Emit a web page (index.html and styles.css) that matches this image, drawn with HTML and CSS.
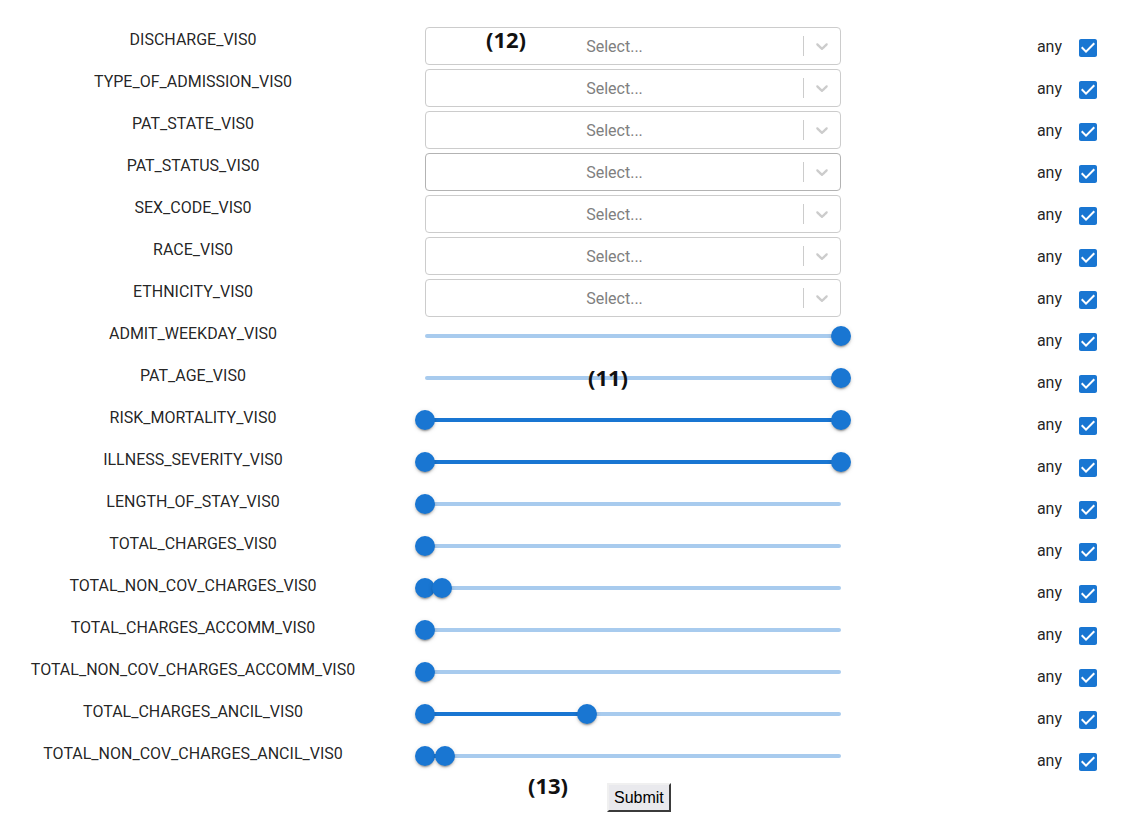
FILE: index.html
```html
<!DOCTYPE html>
<html>
<head>
<meta charset="utf-8">
<link rel="stylesheet" href="styles.css">
</head>
<body>
<div class="page">
  <div class="form">
    <div class="row">
      <div class="label">DISCHARGE_VIS0</div>
      <div class="control"><div class="select"><div class="value">Select...</div><div class="sep"></div><div class="indicator"><svg viewBox="0 0 20 20" width="20" height="20"><path d="M4.516 7.548c0.436-0.446 1.043-0.481 1.576 0l3.908 3.747 3.908-3.747c0.533-0.481 1.141-0.446 1.574 0 0.436 0.445 0.408 1.197 0 1.615-0.406 0.418-4.695 4.502-4.695 4.502-0.217 0.223-0.502 0.335-0.787 0.335s-0.57-0.112-0.789-0.335c0 0-4.287-4.084-4.695-4.502s-0.436-1.170 0-1.615z"/></svg></div></div></div>
      <div class="any"><span>any</span><span class="cb"><svg viewBox="0 0 24 24" width="24" height="24"><path d="M19 3H5c-1.11 0-2 .9-2 2v14c0 1.1.89 2 2 2h14c1.11 0 2-.9 2-2V5c0-1.1-.89-2-2-2zm-9 14l-5-5 1.41-1.41L10 14.17l7.59-7.59L19 8l-9 9z"/></svg></span></div>
    </div>
    <div class="row">
      <div class="label">TYPE_OF_ADMISSION_VIS0</div>
      <div class="control"><div class="select"><div class="value">Select...</div><div class="sep"></div><div class="indicator"><svg viewBox="0 0 20 20" width="20" height="20"><path d="M4.516 7.548c0.436-0.446 1.043-0.481 1.576 0l3.908 3.747 3.908-3.747c0.533-0.481 1.141-0.446 1.574 0 0.436 0.445 0.408 1.197 0 1.615-0.406 0.418-4.695 4.502-4.695 4.502-0.217 0.223-0.502 0.335-0.787 0.335s-0.57-0.112-0.789-0.335c0 0-4.287-4.084-4.695-4.502s-0.436-1.17 0-1.615z"/></svg></div></div></div>
      <div class="any"><span>any</span><span class="cb"><svg viewBox="0 0 24 24" width="24" height="24"><path d="M19 3H5c-1.11 0-2 .9-2 2v14c0 1.1.89 2 2 2h14c1.11 0 2-.9 2-2V5c0-1.1-.89-2-2-2zm-9 14l-5-5 1.41-1.41L10 14.17l7.59-7.59L19 8l-9 9z"/></svg></span></div>
    </div>
    <div class="row">
      <div class="label">PAT_STATE_VIS0</div>
      <div class="control"><div class="select"><div class="value">Select...</div><div class="sep"></div><div class="indicator"><svg viewBox="0 0 20 20" width="20" height="20"><path d="M4.516 7.548c0.436-0.446 1.043-0.481 1.576 0l3.908 3.747 3.908-3.747c0.533-0.481 1.141-0.446 1.574 0 0.436 0.445 0.408 1.197 0 1.615-0.406 0.418-4.695 4.502-4.695 4.502-0.217 0.223-0.502 0.335-0.787 0.335s-0.57-0.112-0.789-0.335c0 0-4.287-4.084-4.695-4.502s-0.436-1.17 0-1.615z"/></svg></div></div></div>
      <div class="any"><span>any</span><span class="cb"><svg viewBox="0 0 24 24" width="24" height="24"><path d="M19 3H5c-1.11 0-2 .9-2 2v14c0 1.1.89 2 2 2h14c1.11 0 2-.9 2-2V5c0-1.1-.89-2-2-2zm-9 14l-5-5 1.41-1.41L10 14.17l7.59-7.59L19 8l-9 9z"/></svg></span></div>
    </div>
    <div class="row">
      <div class="label">PAT_STATUS_VIS0</div>
      <div class="control"><div class="select hover"><div class="value">Select...</div><div class="sep"></div><div class="indicator"><svg viewBox="0 0 20 20" width="20" height="20"><path d="M4.516 7.548c0.436-0.446 1.043-0.481 1.576 0l3.908 3.747 3.908-3.747c0.533-0.481 1.141-0.446 1.574 0 0.436 0.445 0.408 1.197 0 1.615-0.406 0.418-4.695 4.502-4.695 4.502-0.217 0.223-0.502 0.335-0.787 0.335s-0.57-0.112-0.789-0.335c0 0-4.287-4.084-4.695-4.502s-0.436-1.17 0-1.615z"/></svg></div></div></div>
      <div class="any"><span>any</span><span class="cb"><svg viewBox="0 0 24 24" width="24" height="24"><path d="M19 3H5c-1.11 0-2 .9-2 2v14c0 1.1.89 2 2 2h14c1.11 0 2-.9 2-2V5c0-1.1-.89-2-2-2zm-9 14l-5-5 1.41-1.41L10 14.17l7.59-7.59L19 8l-9 9z"/></svg></span></div>
    </div>
    <div class="row">
      <div class="label">SEX_CODE_VIS0</div>
      <div class="control"><div class="select"><div class="value">Select...</div><div class="sep"></div><div class="indicator"><svg viewBox="0 0 20 20" width="20" height="20"><path d="M4.516 7.548c0.436-0.446 1.043-0.481 1.576 0l3.908 3.747 3.908-3.747c0.533-0.481 1.141-0.446 1.574 0 0.436 0.445 0.408 1.197 0 1.615-0.406 0.418-4.695 4.502-4.695 4.502-0.217 0.223-0.502 0.335-0.787 0.335s-0.57-0.112-0.789-0.335c0 0-4.287-4.084-4.695-4.502s-0.436-1.17 0-1.615z"/></svg></div></div></div>
      <div class="any"><span>any</span><span class="cb"><svg viewBox="0 0 24 24" width="24" height="24"><path d="M19 3H5c-1.11 0-2 .9-2 2v14c0 1.1.89 2 2 2h14c1.11 0 2-.9 2-2V5c0-1.1-.89-2-2-2zm-9 14l-5-5 1.41-1.41L10 14.17l7.59-7.59L19 8l-9 9z"/></svg></span></div>
    </div>
    <div class="row">
      <div class="label">RACE_VIS0</div>
      <div class="control"><div class="select"><div class="value">Select...</div><div class="sep"></div><div class="indicator"><svg viewBox="0 0 20 20" width="20" height="20"><path d="M4.516 7.548c0.436-0.446 1.043-0.481 1.576 0l3.908 3.747 3.908-3.747c0.533-0.481 1.141-0.446 1.574 0 0.436 0.445 0.408 1.197 0 1.615-0.406 0.418-4.695 4.502-4.695 4.502-0.217 0.223-0.502 0.335-0.787 0.335s-0.57-0.112-0.789-0.335c0 0-4.287-4.084-4.695-4.502s-0.436-1.17 0-1.615z"/></svg></div></div></div>
      <div class="any"><span>any</span><span class="cb"><svg viewBox="0 0 24 24" width="24" height="24"><path d="M19 3H5c-1.11 0-2 .9-2 2v14c0 1.1.89 2 2 2h14c1.11 0 2-.9 2-2V5c0-1.1-.89-2-2-2zm-9 14l-5-5 1.41-1.41L10 14.17l7.59-7.59L19 8l-9 9z"/></svg></span></div>
    </div>
    <div class="row">
      <div class="label">ETHNICITY_VIS0</div>
      <div class="control"><div class="select"><div class="value">Select...</div><div class="sep"></div><div class="indicator"><svg viewBox="0 0 20 20" width="20" height="20"><path d="M4.516 7.548c0.436-0.446 1.043-0.481 1.576 0l3.908 3.747 3.908-3.747c0.533-0.481 1.141-0.446 1.574 0 0.436 0.445 0.408 1.197 0 1.615-0.406 0.418-4.695 4.502-4.695 4.502-0.217 0.223-0.502 0.335-0.787 0.335s-0.57-0.112-0.789-0.335c0 0-4.287-4.084-4.695-4.502s-0.436-1.17 0-1.615z"/></svg></div></div></div>
      <div class="any"><span>any</span><span class="cb"><svg viewBox="0 0 24 24" width="24" height="24"><path d="M19 3H5c-1.11 0-2 .9-2 2v14c0 1.1.89 2 2 2h14c1.11 0 2-.9 2-2V5c0-1.1-.89-2-2-2zm-9 14l-5-5 1.41-1.41L10 14.17l7.59-7.59L19 8l-9 9z"/></svg></span></div>
    </div>
    <div class="row">
      <div class="label">ADMIT_WEEKDAY_VIS0</div>
      <div class="control"><div class="slider"><div class="rail"></div><span class="thumb" style="left:416px"></span></div></div>
      <div class="any"><span>any</span><span class="cb"><svg viewBox="0 0 24 24" width="24" height="24"><path d="M19 3H5c-1.11 0-2 .9-2 2v14c0 1.1.89 2 2 2h14c1.11 0 2-.9 2-2V5c0-1.1-.89-2-2-2zm-9 14l-5-5 1.41-1.41L10 14.17l7.59-7.59L19 8l-9 9z"/></svg></span></div>
    </div>
    <div class="row">
      <div class="label">PAT_AGE_VIS0</div>
      <div class="control"><div class="slider"><div class="rail"></div><span class="thumb" style="left:416px"></span></div></div>
      <div class="any"><span>any</span><span class="cb"><svg viewBox="0 0 24 24" width="24" height="24"><path d="M19 3H5c-1.11 0-2 .9-2 2v14c0 1.1.89 2 2 2h14c1.11 0 2-.9 2-2V5c0-1.1-.89-2-2-2zm-9 14l-5-5 1.41-1.41L10 14.17l7.59-7.59L19 8l-9 9z"/></svg></span></div>
    </div>
    <div class="row">
      <div class="label">RISK_MORTALITY_VIS0</div>
      <div class="control"><div class="slider"><div class="rail"></div><div class="track" style="left:0;width:416px"></div><span class="thumb" style="left:0"></span><span class="thumb" style="left:416px"></span></div></div>
      <div class="any"><span>any</span><span class="cb"><svg viewBox="0 0 24 24" width="24" height="24"><path d="M19 3H5c-1.11 0-2 .9-2 2v14c0 1.1.89 2 2 2h14c1.11 0 2-.9 2-2V5c0-1.1-.89-2-2-2zm-9 14l-5-5 1.41-1.41L10 14.17l7.59-7.59L19 8l-9 9z"/></svg></span></div>
    </div>
    <div class="row">
      <div class="label">ILLNESS_SEVERITY_VIS0</div>
      <div class="control"><div class="slider"><div class="rail"></div><div class="track" style="left:0;width:416px"></div><span class="thumb" style="left:0"></span><span class="thumb" style="left:416px"></span></div></div>
      <div class="any"><span>any</span><span class="cb"><svg viewBox="0 0 24 24" width="24" height="24"><path d="M19 3H5c-1.11 0-2 .9-2 2v14c0 1.1.89 2 2 2h14c1.11 0 2-.9 2-2V5c0-1.1-.89-2-2-2zm-9 14l-5-5 1.41-1.41L10 14.17l7.59-7.59L19 8l-9 9z"/></svg></span></div>
    </div>
    <div class="row">
      <div class="label">LENGTH_OF_STAY_VIS0</div>
      <div class="control"><div class="slider"><div class="rail"></div><span class="thumb" style="left:0"></span></div></div>
      <div class="any"><span>any</span><span class="cb"><svg viewBox="0 0 24 24" width="24" height="24"><path d="M19 3H5c-1.11 0-2 .9-2 2v14c0 1.1.89 2 2 2h14c1.11 0 2-.9 2-2V5c0-1.1-.89-2-2-2zm-9 14l-5-5 1.41-1.41L10 14.17l7.59-7.59L19 8l-9 9z"/></svg></span></div>
    </div>
    <div class="row">
      <div class="label">TOTAL_CHARGES_VIS0</div>
      <div class="control"><div class="slider"><div class="rail"></div><span class="thumb" style="left:0"></span></div></div>
      <div class="any"><span>any</span><span class="cb"><svg viewBox="0 0 24 24" width="24" height="24"><path d="M19 3H5c-1.11 0-2 .9-2 2v14c0 1.1.89 2 2 2h14c1.11 0 2-.9 2-2V5c0-1.1-.89-2-2-2zm-9 14l-5-5 1.41-1.41L10 14.17l7.59-7.59L19 8l-9 9z"/></svg></span></div>
    </div>
    <div class="row">
      <div class="label">TOTAL_NON_COV_CHARGES_VIS0</div>
      <div class="control"><div class="slider"><div class="rail"></div><div class="track" style="left:0;width:17px"></div><span class="thumb" style="left:0"></span><span class="thumb" style="left:17px"></span></div></div>
      <div class="any"><span>any</span><span class="cb"><svg viewBox="0 0 24 24" width="24" height="24"><path d="M19 3H5c-1.11 0-2 .9-2 2v14c0 1.1.89 2 2 2h14c1.11 0 2-.9 2-2V5c0-1.1-.89-2-2-2zm-9 14l-5-5 1.41-1.41L10 14.17l7.59-7.59L19 8l-9 9z"/></svg></span></div>
    </div>
    <div class="row">
      <div class="label">TOTAL_CHARGES_ACCOMM_VIS0</div>
      <div class="control"><div class="slider"><div class="rail"></div><span class="thumb" style="left:0"></span></div></div>
      <div class="any"><span>any</span><span class="cb"><svg viewBox="0 0 24 24" width="24" height="24"><path d="M19 3H5c-1.11 0-2 .9-2 2v14c0 1.1.89 2 2 2h14c1.11 0 2-.9 2-2V5c0-1.1-.89-2-2-2zm-9 14l-5-5 1.41-1.41L10 14.17l7.59-7.59L19 8l-9 9z"/></svg></span></div>
    </div>
    <div class="row">
      <div class="label">TOTAL_NON_COV_CHARGES_ACCOMM_VIS0</div>
      <div class="control"><div class="slider"><div class="rail"></div><span class="thumb" style="left:0"></span></div></div>
      <div class="any"><span>any</span><span class="cb"><svg viewBox="0 0 24 24" width="24" height="24"><path d="M19 3H5c-1.11 0-2 .9-2 2v14c0 1.1.89 2 2 2h14c1.11 0 2-.9 2-2V5c0-1.1-.89-2-2-2zm-9 14l-5-5 1.41-1.41L10 14.17l7.59-7.59L19 8l-9 9z"/></svg></span></div>
    </div>
    <div class="row">
      <div class="label">TOTAL_CHARGES_ANCIL_VIS0</div>
      <div class="control"><div class="slider"><div class="rail"></div><div class="track" style="left:0;width:162px"></div><span class="thumb" style="left:0"></span><span class="thumb" style="left:162px"></span></div></div>
      <div class="any"><span>any</span><span class="cb"><svg viewBox="0 0 24 24" width="24" height="24"><path d="M19 3H5c-1.11 0-2 .9-2 2v14c0 1.1.89 2 2 2h14c1.11 0 2-.9 2-2V5c0-1.1-.89-2-2-2zm-9 14l-5-5 1.41-1.41L10 14.17l7.59-7.59L19 8l-9 9z"/></svg></span></div>
    </div>
    <div class="row">
      <div class="label">TOTAL_NON_COV_CHARGES_ANCIL_VIS0</div>
      <div class="control"><div class="slider"><div class="rail"></div><div class="track" style="left:0;width:20px"></div><span class="thumb" style="left:0"></span><span class="thumb" style="left:20px"></span></div></div>
      <div class="any"><span>any</span><span class="cb"><svg viewBox="0 0 24 24" width="24" height="24"><path d="M19 3H5c-1.11 0-2 .9-2 2v14c0 1.1.89 2 2 2h14c1.11 0 2-.9 2-2V5c0-1.1-.89-2-2-2zm-9 14l-5-5 1.41-1.41L10 14.17l7.59-7.59L19 8l-9 9z"/></svg></span></div>
    </div>
  </div>
  <div class="footer">
    <button class="submit" type="button">Submit</button>
  </div>
  <span class="note note-12">(12)</span>
  <span class="note note-11">(11)</span>
  <span class="note note-13">(13)</span>
</div>
</body>
</html>
```
FILE: styles.css
```css
* { box-sizing: border-box; }
body {
  margin: 8px;
  background: #fff;
  font-family: Roboto, "Liberation Sans", sans-serif;
  color: rgba(0,0,0,0.87);
}
.page {
  position: relative;
  padding-top: 19px;
}
.form {
  display: flex;
  flex-direction: column;
}
.row {
  display: grid;
  grid-template-columns: 370px 416px 1fr;
  column-gap: 47px;
  height: 42px;
  align-items: start;
}
.label {
  font-size: 16px;
  line-height: 24px;
  padding-top: 1px;
  text-align: center;
  white-space: nowrap;
}
.control { width: 416px; }
.select {
  height: 38px;
  border: 1px solid #ccc;
  border-radius: 4px;
  display: flex;
  align-items: stretch;
  background: #fff;
}
.select.hover { border-color: #b3b3b3; }
.value {
  flex: 1;
  display: flex;
  align-items: center;
  justify-content: center;
  padding: 2px 8px;
  color: #808080;
  font-size: 16px;
}
.sep {
  width: 1px;
  background: #ccc;
  margin: 8px 0;
}
.indicator {
  width: 36px;
  display: flex;
  align-items: center;
  justify-content: center;
}
.indicator svg { fill: #ccc; }
.slider {
  position: relative;
  width: 416px;
  height: 30px;
  padding: 13px 0;
}
.rail {
  height: 4px;
  border-radius: 2px;
  background: #a8cbee;
}
.track {
  position: absolute;
  top: 13px;
  height: 4px;
  background: #1976d2;
  border-radius: 2px;
}
.thumb {
  position: absolute;
  top: 5px;
  width: 20px;
  height: 20px;
  margin-left: -10px;
  border-radius: 50%;
  background: #1976d2;
  box-shadow: 0 3px 1px -2px rgba(0,0,0,0.2), 0 2px 2px 0 rgba(0,0,0,0.14), 0 1px 5px 0 rgba(0,0,0,0.12);
}
.any {
  display: flex;
  justify-content: flex-end;
  align-items: center;
  height: 42px;
  padding-right: 23px;
  font-size: 16px;
  gap: 5px;
}
.any span:first-child { line-height: 24px; margin-bottom: 2px; }
.cb {
  width: 42px;
  height: 42px;
  padding: 9px;
  display: flex;
}
.cb svg { fill: #1976d2; }
.footer {
  display: flex;
  padding-left: 599px;
}
.submit {
  height: 29px;
  padding: 0 5px;
  font-family: "Liberation Sans", Arial, sans-serif;
  font-size: 16px;
  color: #000;
  background: #e9e9ed;
  border: 2px outset;
  border-color: #f0f0f0 #8f8f8f #8f8f8f #f0f0f0;
}
.note {
  position: absolute;
  font-family: "Open Sans", sans-serif;
  font-weight: 700;
  font-size: 22px;
  line-height: 30px;
  color: #111;
}
.note-12 { left: 478px; top: 16px; }
.note-11 { left: 580px; top: 354px; }
.note-13 { left: 520px; top: 762px; }
```
